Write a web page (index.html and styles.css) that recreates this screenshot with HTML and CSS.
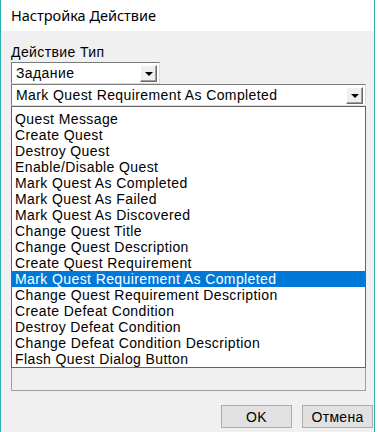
FILE: index.html
```html
<!DOCTYPE html>
<html>
<head>
<meta charset="utf-8">
<link rel="stylesheet" href="styles.css">
</head>
<body>
<div class="window">
  <div class="titlebar">Настройка Действие</div>
  <div class="content">
    <div class="label">Действие Тип</div>
    <div class="combo combo-small">
      <span class="combo-text">Задание</span>
      <span class="drop-btn"><span class="tri"></span></span>
    </div>
    <div class="combo-area">
      <div class="combo combo-wide">
        <span class="combo-text">Mark Quest Requirement As Completed</span>
        <span class="drop-btn"><span class="tri"></span></span>
      </div>
      <div class="listbox"></div>
      <ul class="popup">
        <li>Quest Message</li>
        <li>Create Quest</li>
        <li>Destroy Quest</li>
        <li>Enable/Disable Quest</li>
        <li>Mark Quest As Completed</li>
        <li>Mark Quest As Failed</li>
        <li>Mark Quest As Discovered</li>
        <li>Change Quest Title</li>
        <li>Change Quest Description</li>
        <li>Create Quest Requirement</li>
        <li class="selected">Mark Quest Requirement As Completed</li>
        <li>Change Quest Requirement Description</li>
        <li>Create Defeat Condition</li>
        <li>Destroy Defeat Condition</li>
        <li>Change Defeat Condition Description</li>
        <li>Flash Quest Dialog Button</li>
      </ul>
    </div>
    <div class="buttons">
      <button class="btn btn-ok">OK</button>
      <button class="btn btn-cancel">Отмена</button>
    </div>
  </div>
</div>
</body>
</html>
```
FILE: styles.css
```css
html, body {
  margin: 0;
  padding: 0;
  background: #ffffff;
}
.window {
  width: 375px;
  height: 432px;
  box-sizing: border-box;
  border-left: 1px solid #2bb0b4;
  border-right: 1px solid #2bb0b4;
  display: flex;
  flex-direction: column;
  font-family: "Liberation Sans", Arial, sans-serif;
  font-size: 14px;
  letter-spacing: 0.4px;
  color: #000;
}
.titlebar {
  height: 31px;
  box-sizing: border-box;
  background: #ffffff;
  padding: 5px 0 0 10px;
  font-family: "Noto Sans", "Open Sans", sans-serif;
  font-size: 14.5px;
  letter-spacing: 0;
  line-height: 20px;
}
.content {
  flex: 1;
  background: #f0f0f0;
  padding: 13px 0 0 10px;
  display: flex;
  flex-direction: column;
}
.label {
  height: 17px;
  line-height: 16px;
}
.combo {
  height: 22px;
  box-sizing: border-box;
  background: #fff;
  border: 1px solid #7a7a7a;
  border-right-color: #dcdcdc;
  border-bottom-color: #dcdcdc;
  display: flex;
  align-items: center;
  padding: 0 2px 0 4px;
}
.combo-small {
  width: 149px;
  margin-top: 1px;
}
.combo-wide {
  width: 355px;
}
.combo-text {
  flex: 1;
  line-height: 16px;
  white-space: nowrap;
}
.drop-btn {
  width: 17px;
  height: 17px;
  box-sizing: border-box;
  background: #f0f0f0;
  border: 1px solid #ffffff;
  border-right-color: #696969;
  border-bottom-color: #696969;
  box-shadow: -1px -1px 0 #a0a0a0 inset;
  display: flex;
  align-items: center;
  justify-content: center;
}
.tri {
  width: 0;
  height: 0;
  border-left: 4px solid transparent;
  border-right: 4px solid transparent;
  border-top: 4px solid #000;
  margin-top: 1px;
}
.combo-area {
  position: relative;
  width: 355px;
}
.listbox {
  height: 285px;
  box-sizing: border-box;
  border: 1px solid #a0a0a0;
  border-top: none;
  background: #f0f0f0;
}
.popup {
  position: absolute;
  left: 0;
  top: 22px;
  width: 355px;
  margin: 0;
  padding: 4px 0 0 0;
  list-style: none;
  box-sizing: border-box;
  height: 262px;
  background: #fff;
  border: 1px solid #646464;
}
.popup li {
  height: 16px;
  line-height: 16px;
  padding-left: 3px;
  white-space: nowrap;
}
.popup li.selected {
  background: #0078d7;
  color: #fff;
}
.buttons {
  display: flex;
  justify-content: flex-end;
  gap: 10px;
  padding: 14px 1px 0 0;
}
.btn {
  width: 71px;
  height: 23px;
  box-sizing: border-box;
  background: #e1e1e1;
  border: 1px solid #adadad;
  font-family: "Liberation Sans", Arial, sans-serif;
  font-size: 14px;
  letter-spacing: 0.3px;
  color: #000;
  padding: 0;
}
```
